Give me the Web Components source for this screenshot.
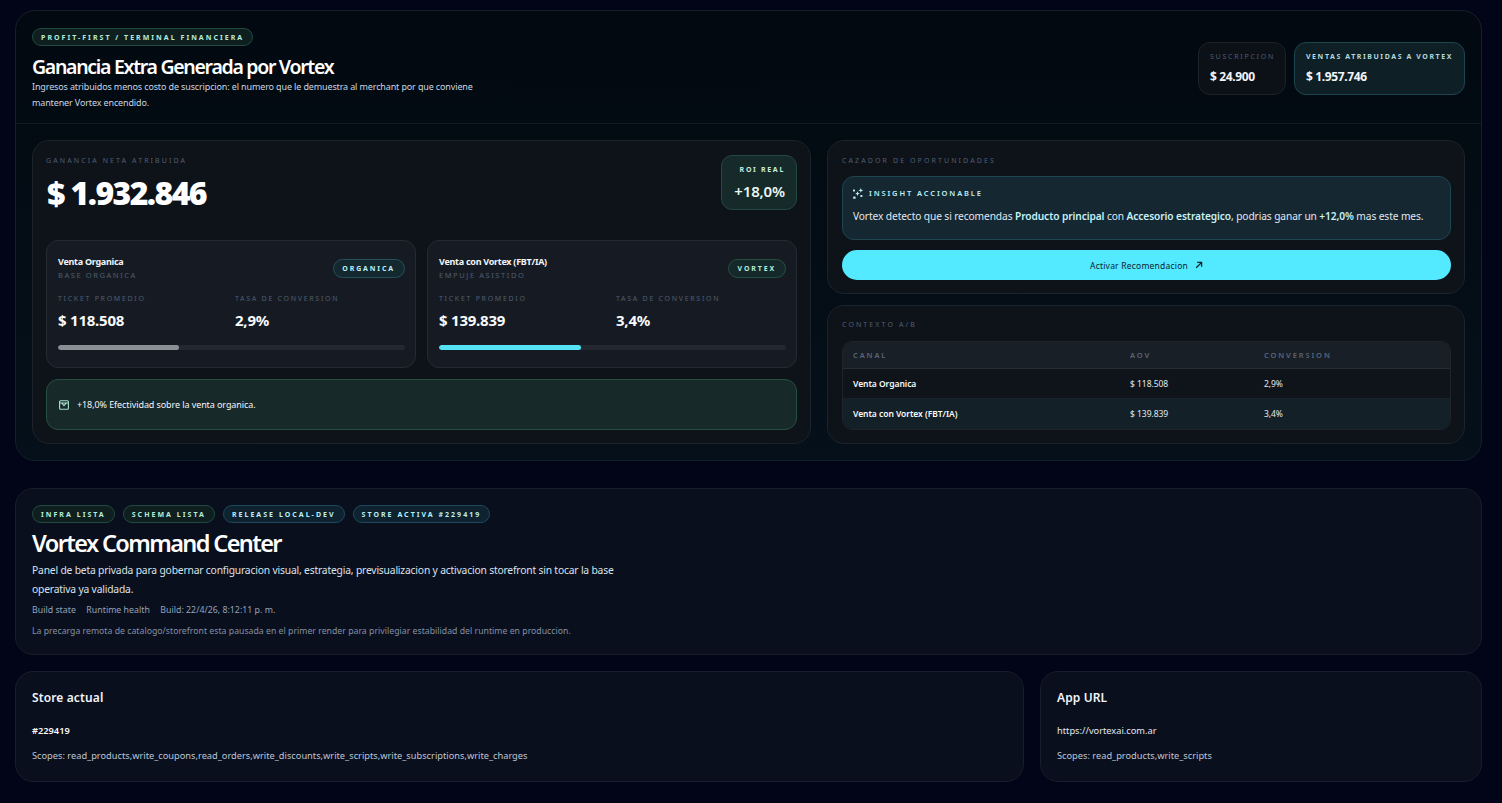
<!doctype html>
<html lang="es"><head><meta charset="utf-8"><title>Vortex</title>
<style>
html,body{margin:0;background:#020518;}
body{font-family:"Noto Sans","Open Sans",sans-serif;color:#f1f5f9;height:803px;overflow:hidden;}
vx-app{display:block}
</style></head><body>
<vx-app></vx-app>
<script>
const base=`*{box-sizing:border-box}`;
function def(name,css,html){
  customElements.define(name,class extends HTMLElement{
    connectedCallback(){
      if(this.shadowRoot)return;
      const r=this.attachShadow({mode:'open'});
      r.innerHTML=`<style>${base}${css}</style>`+(typeof html==='function'?html(this):html);
    }
  });
}
const a=(e,n,d='')=>e.getAttribute(n)??d;

def('vx-pill',`:host{display:inline-flex;align-items:center;height:18px;padding:0 8px;border-radius:999px;border:1px solid #1f4a3f;background:#0f1f20;color:#b7ecd8;font-size:7px;font-weight:700;letter-spacing:.29em;white-space:nowrap;line-height:1}
:host([tone=blue]){border-color:#1c4a5c;background:#0e2230;color:#bfeef5}
:host([tone=teal]){border-color:#245159;background:#14282f;color:#bfeef5;letter-spacing:.265em;height:19px;padding:0 8.500px}
:host([tone=green]){border-color:#24503f;background:#15292a;color:#b7ecd8;letter-spacing:.265em;height:19px;padding:0 8.500px}`,`<slot></slot>`);

def('vx-label',`:host{display:block;font-size:7px;letter-spacing:.3em;color:#535e72;line-height:10px;white-space:nowrap}`,`<slot></slot>`);

def('vx-stat',`:host{display:flex;flex-direction:column;gap:7px;height:53px;padding:9px 11px;border-radius:12px;border:1px solid #1d2229;background:#0c1117}
:host([accent]){border-color:#1b4650;background:#0e1f25}
.l{font-size:7px;letter-spacing:.25em;color:#4f5a6c;line-height:10px;white-space:nowrap}
:host([accent]) .l{color:#b4d8dc;font-weight:700;letter-spacing:.225em}
.v{font-size:12px;font-weight:700;color:#f1f5f9;line-height:16px;letter-spacing:-.03em;white-space:nowrap}`,
e=>`<div class="l">${a(e,'label')}</div><div class="v">${a(e,'value')}</div>`);

def('vx-metric',`:host{display:block}
.l{font-size:7px;letter-spacing:.245em;color:#505b6e;line-height:10px;white-space:nowrap}
.v{font-size:15px;font-weight:700;color:#f8fafc;line-height:20px;margin-top:6px;letter-spacing:-.015em;white-space:nowrap}`,
e=>`<div class="l">${a(e,'label')}</div><div class="v">${a(e,'value')}</div>`);

def('vx-variant',`:host{display:flex;flex-direction:column;flex:1 1 0;min-width:0;height:128px;padding:15px 10.500px 0 11px;border-radius:12px;border:1px solid #262b33;background:#161b23}
.top{display:flex;justify-content:space-between;align-items:center;height:25px}
.t{font-size:9px;font-weight:700;color:#f1f5f9;line-height:12px;letter-spacing:-.03em;white-space:nowrap}
.s{font-size:7.5px;letter-spacing:.21em;color:#505b6e;line-height:11px;margin-top:2px;white-space:nowrap}
.m{display:grid;grid-template-columns:177px 1fr;margin-top:13px}
.bar{height:5px;border-radius:3px;background:#23272f;margin-top:15px;overflow:hidden}
.bar i{display:block;height:100%;border-radius:3px;background:var(--c)}`,
e=>`<div class="top"><div><div class="t">${a(e,'title')}</div><div class="s">${a(e,'sub')}</div></div><vx-pill tone="${a(e,'tone')}">${a(e,'tag')}</vx-pill></div>
<div class="m"><vx-metric label="TICKET PROMEDIO" value="${a(e,'ticket')}"></vx-metric><vx-metric label="TASA DE CONVERSION" value="${a(e,'rate')}"></vx-metric></div>
<div class="bar" style="--c:${a(e,'color')}"><i style="width:${a(e,'fill')}"></i></div>`);

def('vx-net',`:host{display:flex;flex-direction:column;width:779px;height:304px;border-radius:17px;border:1px solid #1d232a;background:#0d1319;padding:14px 13px 13px}
.head{display:flex;justify-content:space-between;height:55px}
.big{font-size:32px;font-weight:900;color:#fff;line-height:44px;margin:5px 0 0 1px;letter-spacing:-.05em;white-space:nowrap}
.roi{width:76px;height:55px;border-radius:11px;border:1px solid #23483f;background:#162a29;padding:9px 11px;text-align:right}
.roi b{display:block;font-size:7px;letter-spacing:.24em;color:#c6ecdf;line-height:10px;white-space:nowrap}
.roi span{display:block;font-size:15px;font-weight:600;color:#e9f7f2;line-height:20px;margin-top:6px;white-space:nowrap;letter-spacing:-.01em}
.row{display:flex;gap:11px;margin-top:30px}
.note{display:flex;align-items:center;gap:8px;height:51px;margin-top:11px;padding:0 12px;border-radius:12px;border:1px solid #24503f;background:#18292a;font-size:9px;color:#f1f5f9;letter-spacing:-.01em;white-space:nowrap}
svg{width:10px;height:10px;flex:none}`,
`<div class="head"><div><vx-label style="margin-top:1px">GANANCIA NETA ATRIBUIDA</vx-label><div class="big">$ 1.932.846</div></div>
<div class="roi"><b>ROI REAL</b><span>+18,0%</span></div></div>
<div class="row">
<vx-variant title="Venta Organica" sub="BASE ORGANICA" tag="ORGANICA" tone="teal" ticket="$ 118.508" rate="2,9%" color="#8b8e94" fill="35%"></vx-variant>
<vx-variant title="Venta con Vortex (FBT/IA)" sub="EMPUJE ASISTIDO" tag="VORTEX" tone="green" ticket="$ 139.839" rate="3,4%" color="#53e3f5" fill="41%"></vx-variant>
</div>
<div class="note"><svg viewBox="0 0 10 10" fill="none" stroke="#a9e4ce" stroke-width="1.100"><rect x=".6" y=".8" width="8.800" height="8.400" rx="1"/><path d="M.6 3h8.800M2.600 3 5 5.600 7.400 3"/></svg><span>+18,0% Efectividad sobre la venta organica.</span></div>`);

def('vx-hunter',`:host{display:block;height:154px;border-radius:17px;border:1px solid #1d232a;background:#0d1319;padding:15px 13px 0 14px}
.box{height:64px;margin-top:10px;border-radius:12px;border:1px solid #1f4650;background:#152730;padding:10px 10px 0}
.h{display:flex;align-items:center;gap:5px;font-size:7.5px;font-weight:600;letter-spacing:.25em;color:#bfeef5;line-height:12px;white-space:nowrap}
svg{width:11px;height:11px;flex:none}
p{margin:10px 0 0;font-size:10.2px;line-height:14px;color:#e2e8f0;letter-spacing:-.01em;white-space:nowrap}
p b{font-weight:600;color:#c6f1f6}
.btn{display:flex;justify-content:center;align-items:center;gap:7px;height:30px;margin-top:10px;border-radius:15px;background:#53e9ff;color:#0b2530;font-size:8.5px;letter-spacing:.025em;white-space:nowrap}
.btn svg{width:8px;height:8px}`,
`<vx-label>CAZADOR DE OPORTUNIDADES</vx-label>
<div class="box"><div class="h"><svg viewBox="0 0 11 11" fill="#bfeef5"><path d="M7.800 0l.7 1.700 1.800.7-1.800.7-.7 1.700-.7-1.700-1.800-.7 1.800-.7zM4.500 3.200l.7 1.700 1.700.7-1.700.7-.7 1.700-.7-1.700-1.700-.7 1.700-.7z"/><rect x="0" y="1.500" width="2" height="2" rx=".5"/><rect x=".2" y="8.400" width="2.400" height="2.400" rx=".6"/><rect x="7.400" y="7" width="2" height="2" rx=".5"/></svg>INSIGHT ACCIONABLE</div>
<p>Vortex detecto que si recomendas <b>Producto principal</b> con <b>Accesorio estrategico</b>, podrias ganar un <b>+12,0%</b> mas este mes.</p></div>
<div class="btn"><span>Activar Recomendacion</span><svg viewBox="0 0 8 8" fill="none" stroke="#0b2530" stroke-width="1.300"><path d="M1.200 6.800 6.400 1.600M2.200 1.400h4.400v4.400"/></svg></div>`);

def('vx-ab',`:host{display:block;height:139px;border-radius:17px;border:1px solid #1d232a;background:#0d1319;padding:14px 13px 0 14px}
.t{margin-top:11px;height:89px;border-radius:10px;border:1px solid #1e242b;overflow:hidden;display:grid;grid-template-rows:27px 29px 1fr}
.r{display:grid;grid-template-columns:277px 134px 1fr;align-items:center;padding-left:10px;font-size:8.500px;color:#e2e8f0;letter-spacing:-.005em;white-space:nowrap}
.r b{font-weight:600;color:#f8fafc;letter-spacing:-.005em}
.r.th{background:#181f27;border-bottom:1px solid #262c34;color:#5a6576;font-size:7.500px;font-weight:600;letter-spacing:.25em}
.r.a{background:#0e1419}
.r.c{background:#142027;border-top:1px solid #182229;padding-bottom:1px}`,
`<vx-label>CONTEXTO A/B</vx-label><div class="t">
<div class="r th"><span>CANAL</span><span>AOV</span><span>CONVERSION</span></div>
<div class="r a"><b>Venta Organica</b><span>$ 118.508</span><span>2,9%</span></div>
<div class="r c"><b>Venta con Vortex (FBT/IA)</b><span>$ 139.839</span><span>3,4%</span></div></div>`);

def('vx-terminal',`:host{display:block;height:451px;border-radius:20px;border:1px solid #12202a;background:linear-gradient(180deg,#020910,#05101a);overflow:hidden}
header{display:flex;justify-content:space-between;height:113px;border-bottom:1px solid #111b23;padding:17px 16px 0}
.pw{display:flex}
h1{margin:9px 0 0;font-size:19.500px;font-weight:600;line-height:24px;color:#fff;letter-spacing:-1.300px;white-space:nowrap}
p{margin:0;width:470px;font-size:9px;line-height:16px;color:#cbd5e1;letter-spacing:-.015em}
.stats{display:flex;gap:8px;margin-top:14px;height:53px}
main{display:flex;gap:16px;padding:16px 16px 0}
.col{flex:1 1 0;min-width:0;display:flex;flex-direction:column;gap:11px}`,
`<header><div><div class="pw"><vx-pill>PROFIT-FIRST / TERMINAL FINANCIERA</vx-pill></div><h1>Ganancia Extra Generada por Vortex</h1><p>Ingresos atribuidos menos costo de suscripcion: el numero que le demuestra al merchant por que conviene mantener Vortex encendido.</p></div>
<div class="stats"><vx-stat style="width:88px" label="SUSCRIPCION" value="$ 24.900"></vx-stat><vx-stat accent style="width:171px" label="VENTAS ATRIBUIDAS A VORTEX" value="$ 1.957.746"></vx-stat></div></header>
<main><vx-net></vx-net><div class="col"><vx-hunter></vx-hunter><vx-ab></vx-ab></div></main>`);

def('vx-command',`:host{display:block;height:167px;border-radius:18px;border:1px solid #171d2b;background:#0a0f1e;padding:16px 16px 0}
.pills{display:flex;gap:8px}
h2{margin:3px 0 0;font-size:23.500px;font-weight:600;line-height:34px;color:#fff;letter-spacing:-1.600px;white-space:nowrap}
p{margin:1px 0 0;width:600px;font-size:10.300px;line-height:19px;color:#dbe2ea;letter-spacing:-.18px}
.meta{display:flex;gap:10.500px;margin-top:5px;font-size:8.800px;line-height:12px;color:#94a3b8;white-space:nowrap}
.n{margin-top:9px;font-size:8.700px;line-height:12px;color:#8490a3;letter-spacing:.02px;white-space:nowrap}`,
`<div class="pills"><vx-pill>INFRA LISTA</vx-pill><vx-pill>SCHEMA LISTA</vx-pill><vx-pill tone="blue">RELEASE LOCAL-DEV</vx-pill><vx-pill tone="blue">STORE ACTIVA #229419</vx-pill></div>
<h2>Vortex Command Center</h2><p>Panel de beta privada para gobernar configuracion visual, estrategia, previsualizacion y activacion storefront sin tocar la base operativa ya validada.</p>
<div class="meta"><span>Build state</span><span>Runtime health</span><span>Build: 22/4/26, 8:12:11 p. m.</span></div>
<div class="n">La precarga remota de catalogo/storefront esta pausada en el primer render para privilegiar estabilidad del runtime en produccion.</div>`);

def('vx-info',`:host{display:block;height:111px;border-radius:18px;border:1px solid #171d2b;background:#0a0f1e;padding:17px 15px 0 16px}
h3{margin:0;font-size:12px;font-weight:600;line-height:18px;color:#f1f5f9;letter-spacing:.01em;white-space:nowrap}
.m{margin-top:18px;font-size:9.250px;line-height:12px;color:#e2e8f0;white-space:nowrap}
.m.b{font-weight:600;color:#f8fafc}
.s{margin-top:13px;font-size:9.250px;line-height:12px;color:#bcc6d3;white-space:nowrap}`,
e=>`<h3>${a(e,'title')}</h3><div class="m ${e.hasAttribute('strong')?'b':''}">${a(e,'main')}</div><div class="s">${a(e,'scopes')}</div>`);

def('vx-app',`:host{display:flex;flex-direction:column;padding:10px 20px 0 15px}
.cmd{margin-top:27px}
.grid{display:grid;grid-template-columns:1009px 442px;gap:16px;margin-top:16px}`,
`<vx-terminal></vx-terminal><vx-command class="cmd"></vx-command>
<div class="grid"><vx-info title="Store actual" main="#229419" strong scopes="Scopes: read_products,write_coupons,read_orders,write_discounts,write_scripts,write_subscriptions,write_charges"></vx-info>
<vx-info title="App URL" main="https://vortexai.com.ar" scopes="Scopes: read_products,write_scripts"></vx-info></div>`);
</script></body></html>
